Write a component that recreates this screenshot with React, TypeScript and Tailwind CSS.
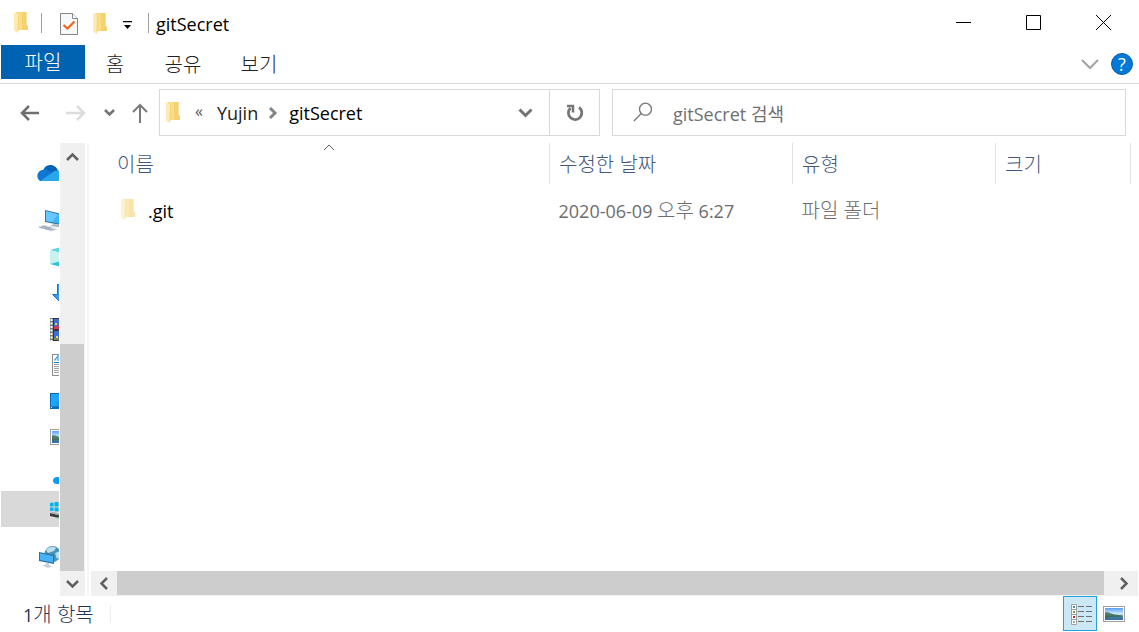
import type { ReactNode } from "react";

function Folder({ className = "" }: { className?: string }) {
  return (
    <svg width="15" height="21" viewBox="0 0 15 21" className={`shrink-0 ${className}`} aria-hidden="true">
      <path d="M2 0H12.500V13L14 14V18H3Z" fill="#f9dc85" />
      <path d="M8 0H12.500V13L14 14V18H8Z" fill="#f4cd66" opacity=".7" />
      <path d="M0 0L4.500 2.500V18L3.500 21L0 18.500Z" fill="#ffebb0" />
      <path d="M4 2.500H5V17L3.500 21V18Z" fill="#f6d57e" />
    </svg>
  );
}

function Chevron({ d, w, h, color = "#606060", stroke = 2.5 }: { d: string; w: number; h: number; color?: string; stroke?: number }) {
  return (
    <svg width={w} height={h} viewBox={`0 0 ${w} ${h}`} fill="none" stroke={color} strokeWidth={stroke} className="shrink-0" aria-hidden="true">
      <path d={d} />
    </svg>
  );
}

function Landscape({ id }: { id: string }) {
  return (
    <svg width="22" height="16" viewBox="0 0 22 16" className="shrink-0" aria-hidden="true">
      <defs>
        <linearGradient id={id} x1="0" y1="0" x2="0" y2="1">
          <stop offset="0" stopColor="#5a9bf5" />
          <stop offset=".5" stopColor="#d6efff" />
          <stop offset=".7" stopColor="#4d8296" />
          <stop offset="1" stopColor="#2e6cae" />
        </linearGradient>
      </defs>
      <rect x=".5" y=".5" width="21" height="15" fill="#fff" stroke="#a0a0a0" />
      <rect x="2" y="2" width="18" height="12" fill={`url(#${id})`} />
      <path d="M2 6.500C5 5.500 8 8 12 8.500L19 9.500V10.500L9 11L2 12Z" fill="#3c6b50" opacity=".85" />
    </svg>
  );
}

const places: { name: string; pad: string; icon: ReactNode }[] = [
  {
    name: "OneDrive",
    pad: "pl-[37px]",
    icon: (
      <svg width="26" height="16" viewBox="0 0 26 16" className="shrink-0">
        <path d="M6 6C7 2 10 0 13.500 0C17 0 20 2.500 21 5.500L15 11Z" fill="#0364b8" />
        <path d="M5.500 5C9 3.500 11 5 13.500 7L19 11L12 16H5C-1 16-1.500 6 5.500 5Z" fill="#0f78d4" />
        <path d="M4 15.500L14 8.500C17 5.500 22 4 26 8V16H5Z" fill="#28a8ea" />
      </svg>
    ),
  },
  {
    name: "내 PC",
    pad: "pl-[38px]",
    icon: (
      <svg width="30" height="22" viewBox="0 0 30 22" className="shrink-0">
        <path d="M7 0L28 5V16L7 12Z" fill="#33789f" />
        <path d="M8 1.200L27 6V14.500L8 11Z" fill="#3fb4fa" />
        <path d="M8 1.200L20 4.200L14 12L8 11Z" fill="#67c8ff" />
        <path d="M16 14L26 16V18L12 16Z" fill="#abb6bf" />
        <path d="M0 17L6 15L20 19L13 21.500Z" fill="#d2d9df" />
        <path d="M1 17L13 20M4 16L16 20M3 18L9 16M7 19L13 17" stroke="#919ca6" strokeWidth=".7" />
      </svg>
    ),
  },
  {
    name: "3D 개체",
    pad: "pl-[50px]",
    icon: (
      <svg width="22" height="20" viewBox="0 0 22 20" className="shrink-0">
        <path d="M0 3L11 0L22 3L11 6Z" fill="#5fd6dc" />
        <path d="M0 3L11 6V15L0 17Z" fill="#c9f1f0" />
        <path d="M11 6L22 3V17L11 15Z" fill="#8fe4e6" />
        <path d="M0 17L11 14L22 17L11 20Z" fill="#35c5d0" />
      </svg>
    ),
  },
  {
    name: "다운로드",
    pad: "pl-[51px]",
    icon: (
      <svg width="18" height="19" viewBox="0 0 18 19" className="shrink-0">
        <path d="M6.500 .5H11.500V10.500H16.500L9 18L1.500 10.500H6.500Z" fill="#3a9bee" stroke="#1e72bd" />
      </svg>
    ),
  },
  {
    name: "동영상",
    pad: "pl-[50px]",
    icon: (
      <svg width="20" height="23" viewBox="0 0 20 23" className="shrink-0">
        <rect width="20" height="23" fill="#33343a" />
        <rect width="3" height="23" fill="#777" />
        <path d="M1.500 1V23" stroke="#fff" strokeWidth="2" strokeDasharray="2 1.500" />
        <path d="M4 1H18V11H4ZM4 13H18V22H4Z" fill="#3c6fd0" />
        <path d="M4 9L8 7L12 10V11H4Z" fill="#d23b55" />
        <path d="M5 5h2v2H5ZM6 18h2v2H6Z" fill="#e2d46a" />
        <path d="M4 20H12V22H4Z" fill="#7c8b55" />
      </svg>
    ),
  },
  {
    name: "문서",
    pad: "pl-[52px]",
    icon: (
      <svg width="18" height="22" viewBox="0 0 18 22" className="shrink-0">
        <rect x=".5" y=".5" width="17" height="21" fill="#fff" stroke="#8c8c8c" />
        <path d="M2 8.500H16" stroke="#1583c9" />
        <path d="M2.500 6.500L6 2V7" stroke="#4ba7de" fill="none" strokeWidth="1.300" />
        <path d="M2 10.500H16M2 12.500H16M2 14.500H16M2 16.500H16M2 18.500H16" stroke="#a2a2a2" />
      </svg>
    ),
  },
  {
    name: "바탕 화면",
    pad: "pl-[50px]",
    icon: (
      <svg width="22" height="16" viewBox="0 0 22 16" className="shrink-0">
        <rect x=".5" y=".5" width="21" height="15" fill="#1fa5fb" stroke="#0b6cb3" />
        <path d="M1 13.500H21V15H1Z" fill="#0c66a8" />
        <path d="M4 13L14 1H21V13Z" fill="#1899ed" />
        <path d="M1 14h1v1H1Z" fill="#fff" />
      </svg>
    ),
  },
  { name: "사진", pad: "pl-[50px]", icon: <Landscape id="sidebar-scene" /> },
  {
    name: "음악",
    pad: "pl-[53px]",
    icon: (
      <svg width="14" height="22" viewBox="0 0 14 22" className="shrink-0">
        <ellipse cx="4.500" cy="18.500" rx="4.500" ry="3.500" fill="#0c9af2" />
        <path d="M7 18V2L13 7" stroke="#0c9af2" strokeWidth="2" fill="none" />
      </svg>
    ),
  },
  {
    name: "로컬 디스크 (C:)",
    pad: "pl-[50px]",
    icon: (
      <svg width="24" height="20" viewBox="0 0 24 20" className="shrink-0">
        <path d="M0 4L3.500 3.500V7.500H0ZM4.500 3.300L8.500 3V7.500H4.500ZM0 8.500H3.500V12L0 11.700ZM4.500 8.500H8.500V12.600L4.500 12.200Z" fill="#00b3f0" />
        <path d="M0 14L24 20H14L0 17Z" fill="#333639" />
        <path d="M0 14L3 13L24 19V20Z" fill="#a6a6a6" />
        <path d="M7 18h2v1.500H7Z" fill="#3fd06b" />
      </svg>
    ),
  },
  {
    name: "네트워크",
    pad: "pl-[39px]",
    icon: (
      <svg width="24" height="22" viewBox="0 0 24 22" className="shrink-0">
        <circle cx="13.500" cy="8" r="8" fill="#4a93b8" />
        <path d="M7 4C10 0 15 0 17 2L15 5L9 7ZM16 7L21 5V11L18 13Z" fill="#b9dfee" />
        <path d="M0 6L15 9V18L0 15Z" fill="#2b6f9d" />
        <path d="M1 7.300L14 10V16.600L1 14Z" fill="#45b4fb" />
        <path d="M7 16.500L10 17V19L13 20L9 22L3 19.500L7 18.500Z" fill="#c7d0d6" />
      </svg>
    ),
  },
];

export default function App() {
  return (
    <div className="flex min-h-screen flex-col overflow-hidden bg-white font-['Open_Sans','Noto_Sans_CJK_KR',sans-serif] text-[18px] leading-6 text-black">
      <header className="flex h-[45px] items-center pr-px pl-[14px]">
        <Folder />
        <span className="ml-3 h-5 w-px bg-[#a0a0a0]" />
        <button type="button" aria-label="속성" className="ml-[18px] pt-[2px]">
          <svg width="18" height="22" viewBox="0 0 18 22" aria-hidden="true">
            <path d="M.5 .5H12.500L17.500 5.500V21.500H.5Z" fill="#f7f8fa" stroke="#858585" />
            <path d="M12.500 .5V5.500H17.500" fill="#fff" stroke="#858585" />
            <path d="M3.500 12L7.500 15.500L14.500 8.500" fill="none" stroke="#f0641e" strokeWidth="2.200" />
          </svg>
        </button>
        <button type="button" aria-label="새 폴더" className="ml-[15px] pt-[2px]"><Folder /></button>
        <button type="button" aria-label="빠른 실행 도구 모음 사용자 지정" className="ml-[15px] pt-[6px]">
          <svg width="9" height="9" viewBox="0 0 9 9" aria-hidden="true">
            <path d="M0 0H9V1.300H0ZM1 4H8L4.500 8Z" />
          </svg>
        </button>
        <span className="ml-4 h-5 w-px bg-[#a0a0a0]" />
        <h1 className="ml-[7px] pt-[3px]">gitSecret</h1>
        <div className="ml-auto flex self-stretch">
          <button type="button" aria-label="최소화" className="flex w-[70px] items-center justify-center">
            <svg width="15" height="15" viewBox="0 0 15 15"><path d="M0 7.500H15" stroke="#000" /></svg>
          </button>
          <button type="button" aria-label="최대화" className="flex w-[70px] items-center justify-center">
            <svg width="15" height="15" viewBox="0 0 15 15"><path d="M.5 .5H14.500V14.500H.5Z" fill="none" stroke="#000" /></svg>
          </button>
          <button type="button" aria-label="닫기" className="flex w-[70px] items-center justify-center">
            <svg width="15" height="15" viewBox="0 0 15 15"><path d="M0 0L15 15M15 0L0 15" stroke="#000" /></svg>
          </button>
        </div>
      </header>

      <nav className="flex h-[39px] items-start border-b border-[#dadada] pl-px text-[20px] font-light text-[#222]">
        <button type="button" className="h-[34px] w-[84px] bg-[#0063b1] pt-[2px] text-white">파일</button>
        <button type="button" className="h-[38px] w-[60px] pt-[2px]">홈</button>
        <button type="button" className="h-[38px] w-[76px] pt-[2px]">공유</button>
        <button type="button" className="h-[38px] w-[76px] pt-[2px]">보기</button>
        <div className="ml-auto flex h-[38px] items-center gap-3 pr-[6px]">
          <button type="button" aria-label="리본 확장">
            <Chevron d="M1 1L9 9L17 1" w={18} h={11} color="#a3a3a3" stroke={2} />
          </button>
          <button type="button" aria-label="도움말" className="flex size-[22px] items-center justify-center rounded-full border border-[#0b5ea8] bg-[#0078d7] text-[18px] leading-none font-normal text-white">?</button>
        </div>
      </nav>

      <div className="flex h-[59px] items-start pt-[5px] pr-[13px]">
        <div className="flex h-[47px] w-[159px] shrink-0 items-center pt-px pl-5">
          <button type="button" aria-label="뒤로">
            <Chevron d="M9 1L2 8L9 15M2 8H19" w={20} h={16} color="#6f6f6f" />
          </button>
          <button type="button" aria-label="앞으로" className="ml-[26px]">
            <Chevron d="M11 1L18 8L11 15M18 8H0" w={20} h={16} color="#dcdcdc" />
          </button>
          <button type="button" aria-label="최근 위치" className="ml-[18px]">
            <Chevron d="M1 1L5.500 5.500L10 1" w={11} h={8} color="#737373" />
          </button>
          <button type="button" aria-label="위로" className="ml-[17px]">
            <Chevron d="M1 9L8 2L15 9M8 2V20" w={16} h={20} color="#7a7a7a" stroke={2} />
          </button>
        </div>
        <div className="grid flex-1 grid-cols-[441fr_514fr] gap-3">
          <div className="flex h-[47px] items-center border border-[#d9d9d9]">
            <Folder className="ml-[6px]" />
            <span className="ml-[14px] mb-1 text-[16px] text-[#555]">«</span>
            <a href="#yujin" className="ml-[14px] pt-px text-[#222]">Yujin</a>
            <span className="mx-[11px]"><Chevron d="M1 1L6 6L1 11" w={9} h={12} color="#858585" stroke={3} /></span>
            <a href="#gitsecret" className="pt-px">gitSecret</a>
            <button type="button" aria-label="이전 위치" className="mr-4 ml-auto">
              <Chevron d="M1.500 1.500L7.500 7.500L13.500 1.500" w={15} h={10} color="#737373" stroke={3} />
            </button>
            <button type="button" aria-label="새로 고침" className="flex h-full w-[50px] items-center justify-center border-l border-[#d9d9d9]">
              <svg width="18" height="18" viewBox="0 0 18 18" fill="none" stroke="#777" strokeWidth="2.800" aria-hidden="true">
                <path d="M13 3.400A6.700 6.700 0 1 1 4.500 4" />
                <path d="M1 2H7V8.500" strokeWidth="2.500" />
              </svg>
            </button>
          </div>
          <label className="flex h-[47px] items-center border border-[#d9d9d9] pl-5">
            <svg width="20" height="20" viewBox="0 0 20 20" fill="none" stroke="#777" strokeWidth="1.300" className="mb-[2px] shrink-0" aria-hidden="true">
              <circle cx="12.500" cy="7.200" r="6" /><path d="M8.200 11.500L1 19" />
            </svg>
            <input type="search" aria-label="gitSecret 검색" placeholder="gitSecret 검색" className="ml-5 min-w-0 flex-1 pt-[2px] outline-none placeholder:text-[#707070]" />
          </label>
        </div>
      </div>

      <div className="flex flex-1">
        <aside className="w-[60px] shrink-0 overflow-hidden pr-px pl-px">
          <ul className="flex flex-col overflow-hidden pt-3">
            {places.map((p) => (
              <li key={p.name} className="first:mb-3 last:mt-3 nth-10:bg-[#d9d9d9]">
                <a href="#place" aria-label={p.name} className={`-ml-px flex h-9 items-center ${p.pad}`}>{p.icon}</a>
              </li>
            ))}
          </ul>
        </aside>
        <div className="flex w-[25px] shrink-0 flex-col bg-[#f0f0f0] pr-px">
          <button type="button" aria-label="위로 스크롤" className="flex h-7 items-center justify-center">
            <Chevron d="M1 8L6.500 2.500L12 8" w={13} h={10} />
          </button>
          <div className="grow-[173]" />
          <div className="grow-[226] bg-[#cdcdcd]" />
          <button type="button" aria-label="아래로 스크롤" className="flex h-[25px] items-center justify-center">
            <Chevron d="M1 2L6.500 7.500L12 2" w={13} h={10} />
          </button>
        </div>
        <div className="ml-[2px] w-[2px] shrink-0 bg-[#f5f5f5]" />
        <main className="ml-[2px] flex min-w-0 flex-1 flex-col pr-px">
          <div className="flex-1 pr-[7px]">
            <table className="w-full table-fixed text-left">
              <colgroup>
                <col />
                <col className="w-[243px]" />
                <col className="w-[203px]" />
                <col className="w-[135px]" />
              </colgroup>
              <thead className="text-[20px] text-[#44597a]">
                <tr className="h-[41px]">
                  <th className="relative border-r border-[#e2e2e2] pt-[2px] pl-[26px] font-light">
                    이름
                    <span className="absolute top-px left-[232px]"><Chevron d="M1 6L6 1L11 6" w={12} h={7} stroke={1} /></span>
                  </th>
                  <th className="border-r border-[#e2e2e2] pt-[2px] pl-[9px] font-light">수정한 날짜</th>
                  <th className="border-r border-[#e2e2e2] pt-[2px] pl-[9px] font-light">유형</th>
                  <th className="border-r border-[#e2e2e2] pt-[2px] pl-[9px] font-light">크기</th>
                </tr>
              </thead>
              <tbody className="text-[#6d6d6d]">
                <tr className="h-[54px]">
                  <td className="pl-[30px] text-black">
                    <a href="#git" className="flex items-center gap-3"><Folder className="mb-1 opacity-60" />.git</a>
                  </td>
                  <td className="pl-[9px]">2020-06-09 <span className="text-[20px] font-light">오후</span> 6:27</td>
                  <td className="pl-[9px] text-[20px] font-light">파일 폴더</td>
                  <td />
                </tr>
              </tbody>
            </table>
          </div>
          <div className="flex h-[25px] bg-[#f0f0f0]">
            <button type="button" aria-label="왼쪽으로 스크롤" className="flex w-[26px] items-center justify-center">
              <Chevron d="M8 1L2.500 6.500L8 12" w={10} h={13} />
            </button>
            <div className="mb-px flex-1 bg-[#cdcdcd]" />
            <button type="button" aria-label="오른쪽으로 스크롤" className="flex w-[34px] items-center justify-center pl-[6px]">
              <Chevron d="M2 1L7.500 6.500L2 12" w={10} h={13} />
            </button>
          </div>
        </main>
      </div>

      <footer className="flex h-9 items-center pb-px pl-[23px] text-[#1f3356]">
        <span className="pt-[3px]">1<span className="text-[20px] font-light">개 항목</span></span>
        <span className="ml-4 h-[18px] w-px bg-[#ececec]" />
        <button type="button" aria-label="자세히" className="mr-[6px] ml-auto flex h-[35px] w-[34px] items-center justify-center border border-[#26a0da] bg-[#cce8f6] pt-[2px] pl-[3px]">
          <svg width="22" height="22" viewBox="0 0 22 22" aria-hidden="true">
            <path d="M.5 .5H5.500V20.500H.5ZM.5 5.500H5.500M.5 10.500H5.500M.5 15.500H5.500" fill="#fff" stroke="#a0a0a0" />
            <path d="M2 2h2v2H2Z" fill="#3f8fb5" /><path d="M2 7h2v2H2Z" fill="#7f9c38" />
            <path d="M2 12h2v2H2Z" fill="#c22c1d" /><path d="M2 17h2v2H2Z" fill="#9bb08a" />
            <path d="M7 2.500H13M15 2.500H21M7 7.500H13M15 7.500H21M7 12.500H13M15 12.500H21M7 17.500H13M15 17.500H21" stroke="#6f6f6f" />
          </svg>
        </button>
        <button type="button" aria-label="큰 아이콘" className="mr-[14px]"><Landscape id="status-scene" /></button>
      </footer>
    </div>
  );
}
